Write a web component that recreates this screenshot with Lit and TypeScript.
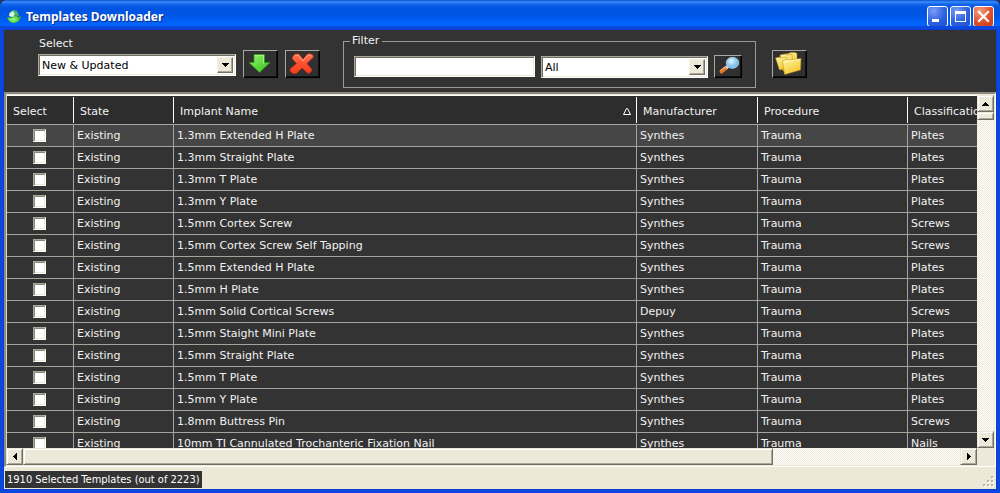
import { LitElement, html, css, svg } from "lit";
import { customElement, property, state } from "lit/decorators.js";
import { classMap } from "lit/directives/class-map.js";

interface Template {
  name: string;
  maker: string;
  kind: string;
}

const TEMPLATES: Template[] = [
  { name: "1.3mm Extended H Plate", maker: "Synthes", kind: "Plates" },
  { name: "1.3mm Straight Plate", maker: "Synthes", kind: "Plates" },
  { name: "1.3mm T Plate", maker: "Synthes", kind: "Plates" },
  { name: "1.3mm Y Plate", maker: "Synthes", kind: "Plates" },
  { name: "1.5mm Cortex Screw", maker: "Synthes", kind: "Screws" },
  { name: "1.5mm Cortex Screw Self Tapping", maker: "Synthes", kind: "Screws" },
  { name: "1.5mm Extended H Plate", maker: "Synthes", kind: "Plates" },
  { name: "1.5mm H Plate", maker: "Synthes", kind: "Plates" },
  { name: "1.5mm Solid Cortical Screws", maker: "Depuy", kind: "Screws" },
  { name: "1.5mm Staight Mini Plate", maker: "Synthes", kind: "Plates" },
  { name: "1.5mm Straight Plate", maker: "Synthes", kind: "Plates" },
  { name: "1.5mm T Plate", maker: "Synthes", kind: "Plates" },
  { name: "1.5mm Y Plate", maker: "Synthes", kind: "Plates" },
  { name: "1.8mm Buttress Pin", maker: "Synthes", kind: "Screws" },
  { name: "10mm TI Cannulated Trochanteric Fixation Nail", maker: "Synthes", kind: "Nails" },
];

const ARROWS: Record<string, string> = {
  up: "M4 0h1v1h1v1h1v1h1v1H1V3h1V2h1V1h1z",
  down: "M1 0h7v1H7v1H6v1H5v1H4V3H3V2H2V1H1z",
  left: "M4 0v7H3V6H2V5H1V4H0V3h1V2h1V1h1V0z",
  right: "M0 0h1v1h1v1h1v1h1v1H3v1H2v1H1v1H0z",
};

const arrow = (dir: string) => {
  const upright = dir === "up" || dir === "down";
  return html`<svg
    width=${upright ? 9 : 4}
    height=${upright ? 4 : 7}
    viewBox=${upright ? "0 0 9 4" : "0 0 4 7"}
    shape-rendering="crispEdges"
    aria-hidden="true"
  >${svg`<path d=${ARROWS[dir]} fill="#000" />`}</svg>`;
};

@customElement("xp-select")
export class XpSelect extends LitElement {
  @property() label = "";
  @property({ type: Boolean }) quiet = false;
  @property({ attribute: false }) options: string[] = [];

  static styles = css`
    :host { display: block; }
    .caption { display: block; height: 14px; margin-bottom: 3px; line-height: 14px; padding-left: 1px; }
    .box { display: grid; height: 22px; box-sizing: border-box; background: #fff;
      border: 1px solid; border-color: #aca899 #fff #fff #aca899;
      box-shadow: inset 1px 1px #716f64, inset -1px -1px #ece9d8; }
    .field { grid-area: 1 / 1; appearance: none; border: 0; border-radius: 0; margin: 0; padding: 2px 20px 0 3px;
      width: 100%; min-width: 0; background: transparent; color: #000; font: inherit; outline: 0; }
    .drop { grid-area: 1 / 1; justify-self: end; display: grid; place-items: center; width: 16px;
      margin: 2px; pointer-events: none; background: #ece9d8; box-sizing: border-box;
      border: 1px solid; border-color: #f4f2e8 #716f64 #716f64 #f4f2e8; box-shadow: inset -1px -1px #aca899; }
  `;

  render() {
    return html`
      ${this.quiet ? "" : html`<label class="caption" for="field">${this.label}</label>`}
      <div class="box">
        <select class="field" id="field" aria-label=${this.label}>
          ${this.options.map((o) => html`<option>${o}</option>`)}
        </select>
        <span class="drop">${arrow("down")}</span>
      </div>
    `;
  }
}

@customElement("xp-scrollbar")
export class XpScrollbar extends LitElement {
  @property({ type: Boolean, reflect: true }) vertical = false;
  @property({ type: Number }) size = 50;

  static styles = css`
    :host { display: flex; height: 17px; background: repeating-conic-gradient(#fff 0 25%, #ece9d8 0 50%) 0 0 / 2px 2px; }
    :host([vertical]) { flex-direction: column; width: 17px; height: auto; }
    .end, .thumb { box-sizing: border-box; background: #ece9d8; border: 1px solid;
      border-color: #ece9d8 #716f64 #716f64 #ece9d8; box-shadow: inset 1px 1px #fff, inset -1px -1px #aca899; }
    .end { flex: none; display: grid; place-items: center; width: 17px; height: 17px; padding: 0; margin: 0; border-radius: 0; }
    .track { flex: 1; min-width: 0; min-height: 0; display: flex; flex-direction: inherit; }
    .thumb { flex: 0 0 auto; }
  `;

  render() {
    const length = `${this.vertical ? "height" : "width"}:${this.size}%`;
    return html`
      <button class="end" aria-label="Scroll back">${arrow(this.vertical ? "up" : "left")}</button>
      <div class="track"><div class="thumb" style=${length}></div></div>
      <button class="end" aria-label="Scroll forward">${arrow(this.vertical ? "down" : "right")}</button>
    `;
  }
}

@customElement("app-root")
export class AppRoot extends LitElement {
  @state() private current = 0;

  static styles = css`
    :host { display: block; height: 100vh; font: 11px/14px "DejaVu Sans", Verdana, sans-serif; color: #f2f2f2; background: #243560; }
    .window { height: 100%; box-sizing: border-box; display: flex; flex-direction: column; overflow: hidden;
      border-radius: 7px 7px 0 0; background: #0a48dc; }
    .title { flex: none; height: 30px; box-sizing: border-box; display: flex; align-items: center; gap: 2px; padding: 3px 6px 0;
      background: linear-gradient(#0a50c8 0, #3a8cff 2px, #1466ec 4px, #0054e0 8px, #0055e5 16px, #0062fb 22px, #0066ff 26px, #0050dc 28px, #003cb4 30px); }
    .name { flex: 1; margin: 0 0 0 2px; font: bold 12px/18px "Noto Sans", "Open Sans", sans-serif; color: #fff; text-shadow: 1px 1px #0a2a80; }
    .sys { width: 21px; height: 21px; padding: 0; box-sizing: border-box; display: grid; place-items: center;
      border: 1px solid #fff; border-radius: 3px; background: radial-gradient(circle at 30% 20%, #7a9df5, #2f62e0 55%, #1c4ed0); }
    .sys.close { background: radial-gradient(circle at 30% 20%, #f0a080, #e0502c 55%, #c43a14); }
    .client { flex: 1; min-height: 0; display: flex; flex-direction: column; margin: 0 4px 4px; background: #ece9d8;
      box-shadow: 0 0 0 1px #0c3fd0, 0 0 0 4px #0b48e0; }

    .tools { flex: none; height: 62px; box-sizing: border-box; display: flex; align-items: flex-start; padding: 7px 34px 0; background: #333; }
    .pick { width: 198px; }
    .tool { flex: none; width: 35px; height: 28px; padding: 0; box-sizing: border-box; display: grid; place-items: center; background: #303030;
      border: 1px solid; border-color: #a8a8a8 #000 #000 #a8a8a8; border-radius: 0; box-shadow: inset -1px -1px #111; margin-top: 13px; }
    .tool.small { width: 28px; height: 23px; margin-top: 0; }
    .actions { display: flex; gap: 7px; margin: 0 23px 0 7px; }
    .filter { width: 413px; height: 54px; box-sizing: border-box; min-width: 0; margin: -3px 16px 0 0; padding: 7px 13px 0 10px; border: 1px solid #999; display: block; }
    .legend { height: 14px; padding: 0 3px 0 2px; margin-left: -4px; }
    .fields { display: flex; align-items: center; gap: 6px; }
    .text { flex: none; width: 181px; height: 21px; box-sizing: border-box; margin: 0; padding: 0 4px; border: 1px solid; border-radius: 0;
      border-color: #aca899 #fff #fff #aca899; box-shadow: inset 1px 1px #716f64, inset -1px -1px #ece9d8; background: #fff; font: inherit; }
    .scope { flex: 1; min-width: 0; }

    .frame { flex: 1; min-height: 0; display: grid; grid-template: minmax(0, 1fr) 17px / minmax(0, 1fr) 17px;
      border: solid; border-width: 2px 1px 1px 2px; border-color: #8e8b7e #fff #fff #8e8b7e; padding: 1px 1px 1px 0; background: #ece9d8; }
    .view { overflow: hidden; background: #333; border-left: 1px solid #d8d6cc; }
    .grid { table-layout: fixed; width: 1057px; border-collapse: separate; border-spacing: 0; }
    .c-select { width: 67px; }
    .c-state { width: 100px; }
    .c-name { width: 463px; }
    .c-maker { width: 121px; }
    .c-proc { width: 150px; }
    .c-kind { width: 156px; }
    .head { height: 30px; box-sizing: border-box; padding: 0; font-weight: normal; text-align: left; vertical-align: top;
      background: #2d2d2d; border-top: 1px solid #fff; border-bottom: 1px solid #a5a49c; }
    .cap { display: flex; align-items: center; justify-content: space-between; height: 26px; margin-top: 1px; box-sizing: border-box;
      padding: 3px 5px 0 6px; border-right: 1px solid #fff; white-space: nowrap; }
    .cell { height: 22px; box-sizing: border-box; padding: 1px 3px 0; white-space: nowrap; overflow: hidden; line-height: 20px;
      border-right: 1px solid #a5a49c; border-bottom: 1px solid #a5a49c; }
    .current .cell { background: #464646; }
    .mid { text-align: center; line-height: 0; padding: 0 4px 0 3px; }
    .tick { appearance: none; width: 13px; height: 13px; margin: 0; background: #fff; border: 1px solid; box-sizing: border-box; vertical-align: middle;
      border-color: #aca899 #fff #fff #aca899; box-shadow: inset 1px 1px #8a877b, inset -1px -1px #ece9d8; }
    .tick:checked { background: #404040; }

    .status { flex: none; height: 22px; box-sizing: border-box; display: flex; justify-content: space-between; align-items: center; padding: 2px 0 0 1px; }
    .count { padding: 0 2px; height: 17px; background: #333; color: #fff; font: 11px/17px "DejaVu Sans Condensed", "DejaVu Sans", sans-serif; }
    .grip { align-self: flex-end; margin: 0 2px 2px 0; }
  `;

  private row(t: Template, i: number) {
    return html`<tr class=${classMap({ current: i === this.current })} @click=${() => (this.current = i)}>
      <td class="cell mid"><input class="tick" type="checkbox" aria-label=${t.name} /></td>
      <td class="cell">Existing</td>
      <td class="cell">${t.name}</td>
      <td class="cell">${t.maker}</td>
      <td class="cell">Trauma</td>
      <td class="cell">${t.kind}</td>
    </tr>`;
  }

  render() {
    return html`
      <div class="window">
        <header class="title">
          <svg width="16" height="16" viewBox="0 0 16 16" aria-hidden="true">
            <defs><radialGradient id="orb" cx=".45" cy=".6"><stop offset="0" stop-color="#9f8" /><stop offset=".6" stop-color="#62d84a" /><stop offset="1" stop-color="#2f9c34" /></radialGradient></defs>
            <path d="M3 4l4-3 4 1 2 4-5 4-5-3z" fill="#4fae6a" />
            <path d="M4 4l3-2 2 3-2 3-4-1z" fill="#d6f4ea" />
            <path d="M1 8l5 1 2-1 1-3 3 3 3-1c0 4-4 7-7 7S2 12 1 8z" fill="url(#orb)" />
          </svg>
          <h1 class="name">Templates Downloader</h1>
          <button class="sys" aria-label="Minimize"><svg width="19" height="19"><path d="M4 12h7v3H4z" fill="#fff" /></svg></button>
          <button class="sys" aria-label="Maximize"><svg width="19" height="19" shape-rendering="crispEdges"><path d="M4 4h11v11H4zM5 7v7h9V7z" fill="#fff" fill-rule="evenodd" /></svg></button>
          <button class="sys close" aria-label="Close"><svg width="19" height="19"><path d="M5 5l9 9M14 5l-9 9" stroke="#fff" stroke-width="2.2" stroke-linecap="square" /></svg></button>
        </header>
        <main class="client">
          <div class="tools">
            <xp-select class="pick" label="Select" .options=${["New & Updated", "All"]}></xp-select>
            <div class="actions">
              <button class="tool" aria-label="Download">
                <svg width="33" height="26" viewBox="0 0 33 26">
                  <defs><linearGradient id="go" x2="1" y2="1"><stop offset="0" stop-color="#a5f07a" /><stop offset=".5" stop-color="#62dc40" /><stop offset="1" stop-color="#38ba20" /></linearGradient></defs>
                  <path d="M10 3.500h10.500v8h5.500L15.500 21.500 5 11.500h5z" fill="url(#go)" stroke="#2f9a1c" stroke-width=".8" stroke-linejoin="round" />
                  <path d="M11 4.500h8.500v8" fill="none" stroke="#b6f592" stroke-width=".8" />
                </svg>
              </button>
              <button class="tool" aria-label="Remove">
                <svg width="33" height="26" viewBox="0 0 33 26">
                  <defs><linearGradient id="no" x2="0" y2="1"><stop offset="0" stop-color="#ff7a58" /><stop offset=".5" stop-color="#fb5030" /><stop offset="1" stop-color="#f2401a" /></linearGradient></defs>
                  <path d="M7 5q2-3 6-2l4 5 4.500-5q3-1 5.500 1l.5 2-6.500 6.500 5 6q0 3-4 4l-6-5.500-5.500 5.500q-5 1-6.500-3l.5-2 6-5-4.500-5z" fill="url(#no)" stroke="#b52a10" stroke-width=".7" stroke-linejoin="round" />
                  <path d="M8.500 5l3.500-1 5 6 5-6 3 .5" fill="none" stroke="#ffa082" stroke-width="1" />
                </svg>
              </button>
            </div>
            <fieldset class="filter">
              <legend class="legend">Filter</legend>
              <div class="fields">
                <input class="text" type="text" aria-label="Filter text" />
                <xp-select class="scope" quiet label="Category" .options=${["All", "Plates", "Screws", "Nails"]}></xp-select>
                <button class="tool small" aria-label="Search">
                  <svg width="26" height="21" viewBox="0 0 26 21">
                    <defs><radialGradient id="lens" cx=".4" cy=".35"><stop offset="0" stop-color="#e4f6ff" /><stop offset="1" stop-color="#7cc0ec" /></radialGradient></defs>
                    <path d="M6.500 15.500l5-4" stroke="#e07828" stroke-width="4" stroke-linecap="round" />
                    <path d="M5.500 14.500l5-4" stroke="#ffc089" stroke-width="1" />
                    <path d="M11 12l3-2.500" stroke="#c9ced4" stroke-width="3" />
                    <ellipse cx="17.500" cy="6.800" rx="6.200" ry="5.500" fill="url(#lens)" stroke="#9cc4e0" stroke-width="1" />
                  </svg>
                </button>
              </div>
            </fieldset>
            <button class="tool" aria-label="Open folders">
              <svg width="33" height="26" viewBox="0 0 33 26">
                <defs><linearGradient id="fold" x2=".6" y2="1"><stop offset="0" stop-color="#fff7a8" /><stop offset="1" stop-color="#f4c82e" /></linearGradient></defs>
                <g fill="url(#fold)" stroke="#b98d18" stroke-width=".5" stroke-linejoin="round">
                  <path d="M12 3l4-.5 1-1 5 0 2 1 0 13-9 2z" />
                  <path d="M7 4l5-1 1 1 6-1 1 14-10 3z" />
                  <path d="M2.500 7l4-1 1 1 6-1 2 11-9 2z" />
                  <path d="M9.500 10l5-2 1 1 12.500-1.500-.5 11.500-16 4.500z" />
                </g>
                <path d="M10.500 11l16.500-2.500" stroke="#fffbd0" stroke-width=".8" />
              </svg>
            </button>
          </div>

          <div class="frame">
            <div class="view">
              <table class="grid">
                <colgroup>
                  <col class="c-select" /><col class="c-state" /><col class="c-name" /><col class="c-maker" /><col class="c-proc" /><col class="c-kind" />
                </colgroup>
                <thead>
                  <tr>
                    <th class="head"><div class="cap">Select</div></th>
                    <th class="head"><div class="cap">State</div></th>
                    <th class="head"><div class="cap">Implant Name
                      <svg width="8" height="8" viewBox="0 0 8 8" aria-hidden="true"><path d="M.5 6.500L3.500.5h1l3 6z" fill="none" stroke="#fff" /></svg></div></th>
                    <th class="head"><div class="cap">Manufacturer</div></th>
                    <th class="head"><div class="cap">Procedure</div></th>
                    <th class="head"><div class="cap">Classification</div></th>
                  </tr>
                </thead>
                <tbody>${TEMPLATES.map((t, i) => this.row(t, i))}</tbody>
              </table>
            </div>
            <xp-scrollbar vertical .size=${2.500}></xp-scrollbar>
            <xp-scrollbar .size=${80}></xp-scrollbar>
          </div>

          <footer class="status">
            <span class="count">1910 Selected Templates (out of 2223)</span>
            <svg class="grip" width="11" height="11" viewBox="0 0 11 11" shape-rendering="crispEdges" aria-hidden="true">
              <path d="M9 1h2v2H9zM5 5h2v2H5zM9 5h2v2H9zM1 9h2v2H1zM5 9h2v2H5zM9 9h2v2H9z" fill="#fff" />
              <path d="M8 0h2v2H8zM4 4h2v2H4zM8 4h2v2H8zM0 8h2v2H0zM4 8h2v2H4zM8 8h2v2H8z" fill="#b8b4a2" />
            </svg>
          </footer>
        </main>
      </div>
    `;
  }
}
